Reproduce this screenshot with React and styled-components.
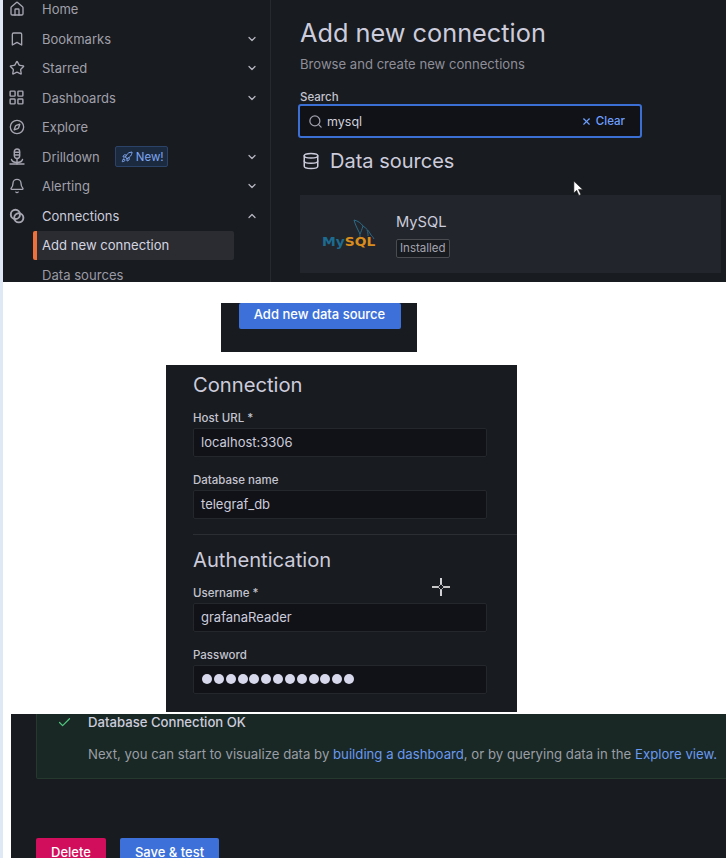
import styled, { createGlobalStyle } from 'styled-components';
import {
  Home,
  Bookmark,
  Star,
  LayoutGrid,
  Compass,
  Bell,
  Rocket,
  Search,
  X,
  Database,
  Check,
  ChevronDown,
  ChevronUp,
} from 'lucide-react';

const GlobalStyle = createGlobalStyle`
  html, body {
    margin: 0;
    padding: 0;
    background: #fff;
  }
  body {
    font-family: Inter, "Liberation Sans", sans-serif;
    overflow: hidden;
  }
`;

const DrilldownIcon = () => (
  <svg width="16" height="18" viewBox="0 0 16 18" fill="none" stroke="currentColor" strokeWidth="1.4" strokeLinecap="round">
    <rect x="5.3" y="1" width="5.4" height="9.5" rx="2.7" />
    <path d="M5.5 4.2h5M5.5 7h5M8 10.5V16" />
    <path d="M2.5 11.5c.6 2.3 2.4 3 5.5 3s4.9-.7 5.5-3" />
    <path d="M1 16h14" />
  </svg>
);

const ConnectionsIcon = () => (
  <svg width="16" height="16" viewBox="0 0 16 16" fill="none" stroke="currentColor" strokeWidth="1.9">
    <circle cx="6.4" cy="6.4" r="4.6" />
    <circle cx="9.8" cy="9.8" r="4.6" />
  </svg>
);

const MysqlDolphin = () => (
  <svg width="22" height="24" viewBox="0 0 22 24" fill="none" stroke="#2b6a86" strokeWidth="1">
    <path d="M1 1c4 1 7 3 9 6 3 2 6 5 8 9 1 1 2 2 3 4" />
    <path d="M1 1c1 4 3 8 5 12 1 1 1 3 1 6" />
    <path d="M10 7c-1 3-2 6-3 8M14 11c1 2 1 4 1 6" />
  </svg>
);

const navItems = [
  { label: 'Home', icon: <Home size={16} /> },
  { label: 'Bookmarks', icon: <Bookmark size={16} />, chevron: 'down' },
  { label: 'Starred', icon: <Star size={16} />, chevron: 'down' },
  { label: 'Dashboards', icon: <LayoutGrid size={17} />, chevron: 'down' },
  { label: 'Explore', icon: <Compass size={16} /> },
  { label: 'Drilldown', icon: <DrilldownIcon />, chevron: 'down', badge: true },
  { label: 'Alerting', icon: <Bell size={16} />, chevron: 'down' },
  { label: 'Connections', icon: <ConnectionsIcon />, chevron: 'up', open: true },
];

const App = () => {
  return (
    <>
      <GlobalStyle />
      <Page>
        <TopShot>
          <Sidebar>
            <NavList>
              {navItems.map((item) => (
                <NavRow key={item.label} $open={item.open}>
                  <NavIcon>{item.icon}</NavIcon>
                  <NavLabel>{item.label}</NavLabel>
                  {item.badge && (
                    <NewBadge>
                      <Rocket size={12} />
                      New!
                    </NewBadge>
                  )}
                  {item.chevron === 'down' && <Chevron><ChevronDown size={12} strokeWidth={2.5} /></Chevron>}
                  {item.chevron === 'up' && <Chevron><ChevronUp size={12} strokeWidth={2.5} /></Chevron>}
                </NavRow>
              ))}
              <SubRow $active>Add new connection</SubRow>
              <SubRow>Data sources</SubRow>
            </NavList>
          </Sidebar>
          <Main>
            <Title>Add new connection</Title>
            <Subtitle>Browse and create new connections</Subtitle>
            <SearchLabel>Search</SearchLabel>
            <SearchBox>
              <Search size={15} color="#a0a0ac" />
              <SearchValue>mysql</SearchValue>
              <ClearButton>
                <X size={11} strokeWidth={2.5} />
                Clear
              </ClearButton>
            </SearchBox>
            <SectionHeading>
              <Database size={18} />
              Data sources
            </SectionHeading>
            <SourceCard>
              <Logo>
                <LogoFish><MysqlDolphin /></LogoFish>
                <LogoText>
                  My<span>SQL</span>
                </LogoText>
              </Logo>
              <SourceInfo>
                <SourceName>MySQL</SourceName>
                <InstalledTag>Installed</InstalledTag>
              </SourceInfo>
            </SourceCard>
            <PointerCursor viewBox="0 0 12 18">
              <path d="M1 1v13l3-3 2.5 5.5 2-1L6 10h4.5z" fill="#fff" stroke="#222" strokeWidth="0.6" />
            </PointerCursor>
          </Main>
        </TopShot>

        <ButtonShot>
          <PrimaryButton $wide>Add new data source</PrimaryButton>
        </ButtonShot>

        <FormShot>
          <FormSection>
            <FormHeading>Connection</FormHeading>
            <Field>
              <FieldLabel>Host URL *</FieldLabel>
              <FieldInput>localhost:3306</FieldInput>
            </Field>
            <Field>
              <FieldLabel>Database name</FieldLabel>
              <FieldInput>telegraf_db</FieldInput>
            </Field>
          </FormSection>
          <Divider />
          <FormSection $lower>
            <FormHeading>Authentication</FormHeading>
            <Field>
              <FieldLabel>Username *</FieldLabel>
              <FieldInput>grafanaReader</FieldInput>
            </Field>
            <Field>
              <FieldLabel>Password</FieldLabel>
              <FieldInput>
                <Dots>
                  {Array.from({ length: 13 }).map((_, i) => (
                    <Dot key={i} />
                  ))}
                </Dots>
              </FieldInput>
            </Field>
          </FormSection>
          <CrossCursor viewBox="0 0 18 18">
            <path d="M9 0v6M9 12v6M0 9h6M12 9h6" stroke="#fff" strokeWidth="1.6" />
            <path d="M9 6l3 3-3 3-3-3z" fill="none" stroke="#ddd" strokeWidth="0.8" />
          </CrossCursor>
        </FormShot>

        <ResultShot>
          <SuccessBox>
            <SuccessIcon><Check size={15} strokeWidth={2} /></SuccessIcon>
            <SuccessBody>
              <SuccessTitle>Database Connection OK</SuccessTitle>
              <SuccessText>
                Next, you can start to visualize data by <TextLink>building a dashboard</TextLink>, or by querying data in the <TextLink>Explore view.</TextLink>
              </SuccessText>
            </SuccessBody>
          </SuccessBox>
          <Actions>
            <DangerButton>Delete</DangerButton>
            <PrimaryButton>Save &amp; test</PrimaryButton>
          </Actions>
        </ResultShot>
      </Page>
    </>
  );
};

export default App;

const Page = styled.div`
  width: 723px;
  height: 858px;
  border-left: 3px solid #dfe8f5;
  overflow: hidden;
  background: #fff;
`;

const TopShot = styled.div`
  display: flex;
  position: relative;
  height: 282px;
  overflow: hidden;
  background: #181b1f;
`;

const Sidebar = styled.nav`
  width: 267px;
  flex-shrink: 0;
  border-right: 1px solid #26292e;
`;

const NavList = styled.div`
  margin-top: -5.5px;
  padding-right: 36px;
`;

const NavRow = styled.div`
  display: flex;
  align-items: center;
  height: 29.5px;
  margin-right: -24px;
  color: ${(p) => (p.$open ? '#ccccdc' : '#a0a0ab')};
`;

const NavIcon = styled.span`
  display: flex;
  justify-content: center;
  width: 27px;
  margin-right: 12px;
  color: #a6a6b2;
`;

const NavLabel = styled.span`
  font-size: 13px;
  line-height: 16px;
`;

const NewBadge = styled.span`
  display: inline-flex;
  align-items: center;
  gap: 3px;
  height: 19px;
  margin-left: 15px;
  padding: 0 3px 0 5px;
  border: 1px solid #2b4368;
  border-radius: 2px;
  background: #1c2a40;
  color: #7ea6ee;
  font-size: 11.5px;
`;

const Chevron = styled.span`
  display: flex;
  margin-left: auto;
  color: #b5b5c0;
`;

const SubRow = styled.div`
  display: flex;
  align-items: center;
  height: 29.5px;
  margin-left: 30px;
  padding-left: ${(p) => (p.$active ? '5px' : '9px')};
  border-left: ${(p) => (p.$active ? '4px solid #f0703a' : 'none')};
  border-radius: 2px;
  background: ${(p) => (p.$active ? '#2a2c31' : 'transparent')};
  color: ${(p) => (p.$active ? '#d4d4e0' : '#9a9aa6')};
  font-size: 13.1px;
`;

const Main = styled.main`
  flex: 1;
  min-width: 0;
  padding: 15px 5px 0 29px;
`;

const Title = styled.h1`
  margin: 0;
  color: #ccccdc;
  font-size: 25.3px;
  font-weight: 400;
  line-height: 36px;
`;

const Subtitle = styled.p`
  margin: 4px 0 0;
  color: #8e8e99;
  font-size: 13.1px;
  line-height: 18px;
`;

const SearchLabel = styled.div`
  margin-top: 17px;
  color: #c4c4d0;
  font-size: 11.5px;
  font-weight: 500;
  line-height: 15px;
`;

const SearchBox = styled.div`
  display: flex;
  align-items: center;
  gap: 4px;
  box-sizing: border-box;
  width: 344px;
  height: 34px;
  margin-left: -2px;
  margin-top: -1px;
  padding: 0 16px 0 9px;
  border: 1px solid #181b1f;
  outline: 2px solid #3b6fd4;
  outline-offset: -2px;
  border-radius: 3px;
  background: #111217;
`;

const SearchValue = styled.span`
  flex: 1;
  color: #d0d0dc;
  font-size: 12.5px;
  font-weight: 400;
`;

const ClearButton = styled.span`
  display: flex;
  align-items: center;
  gap: 4px;
  color: #6e9fff;
  font-size: 11.5px;
  font-weight: 500;
`;

const SectionHeading = styled.h2`
  display: flex;
  align-items: center;
  gap: 10px;
  margin: 10px 0 0 2px;
  color: #ccccdc;
  font-size: 20px;
  font-weight: 400;
  line-height: 26px;
`;

const SourceCard = styled.div`
  display: flex;
  align-items: center;
  height: 78px;
  margin-top: 21px;
  background: #22252b;
`;

const Logo = styled.div`
  position: relative;
  width: 96px;
  height: 30px;
  flex-shrink: 0;
`;

const LogoFish = styled.span`
  position: absolute;
  top: 0;
  left: 53px;
`;

const LogoText = styled.span`
  position: absolute;
  left: 22px;
  bottom: 1px;
  color: #1c6b91;
  font-family: "DejaVu Sans", sans-serif;
  font-size: 11.5px;
  font-weight: 700;
  line-height: 12px;
  transform: scaleX(1.2);
  transform-origin: left center;

  span {
    color: #d98d1c;
  }
`;

const SourceInfo = styled.div`
  display: flex;
  flex-direction: column;
  align-items: flex-start;
  gap: 8px;
  margin-top: 2px;
`;

const SourceName = styled.div`
  color: #ccccdc;
  font-size: 14.7px;
  line-height: 18px;
`;

const InstalledTag = styled.span`
  padding: 0 3px;
  border: 1px solid #4a4c52;
  border-radius: 2px;
  background: #181b1f;
  color: #a4a4b0;
  font-size: 11.5px;
  line-height: 17px;
`;

const PointerCursor = styled.svg`
  position: absolute;
  left: 570px;
  top: 180px;
  width: 11px;
  height: 17px;
`;

const ButtonShot = styled.div`
  box-sizing: border-box;
  width: 196px;
  height: 49px;
  margin: 21px 0 0 218px;
  padding-left: 18px;
  background: #181b1f;
`;

const PrimaryButton = styled.button`
  display: block;
  box-sizing: border-box;
  width: ${(p) => (p.$wide ? '162px' : '99px')};
  height: ${(p) => (p.$wide ? '26px' : '32px')};
  padding: ${(p) => (p.$wide ? '0 1px 5px 0' : '0 0 5px')};
  border: none;
  border-radius: 2px;
  background: #3d71d9;
  color: #fff;
  font-family: inherit;
  font-size: 13px;
  font-weight: 500;
`;

const DangerButton = styled(PrimaryButton)`
  width: 70px;
  background: #d10e5c;
`;

const FormShot = styled.div`
  position: relative;
  box-sizing: border-box;
  width: 351px;
  height: 347px;
  margin: 13px 0 0 163px;
  background: #181b1f;
`;

const FormSection = styled.section`
  padding: ${(p) => (p.$lower ? '12px' : '7px')} 30px 0 27px;
`;

const FormHeading = styled.h3`
  margin: 0;
  color: #ccccdc;
  font-size: 20.2px;
  font-weight: 400;
  line-height: 26px;
`;

const Field = styled.div`
  margin-top: 13px;
  & + & {
    margin-top: 16px;
  }
`;

const FieldLabel = styled.div`
  margin-bottom: 2px;
  color: #c4c4d0;
  font-size: 11.5px;
  font-weight: 500;
  line-height: 15px;
`;

const FieldInput = styled.div`
  display: flex;
  align-items: center;
  box-sizing: border-box;
  height: 29px;
  padding: 0 7px 2px;
  border: 1px solid #24272c;
  border-radius: 2px;
  background: #111217;
  color: #ccccdc;
  font-size: 13px;
`;

const Dots = styled.span`
  display: flex;
  gap: 1.85px;
  margin-left: 1px;
`;

const Dot = styled.span`
  width: 10px;
  height: 10px;
  border-radius: 50%;
  background: #d8d8ec;
`;

const Divider = styled.div`
  height: 1px;
  margin: 15px 0 0 27px;
  background: #2b2e33;
`;

const CrossCursor = styled.svg`
  position: absolute;
  left: 266px;
  top: 213px;
  width: 18px;
  height: 18px;
`;

const ResultShot = styled.div`
  box-sizing: border-box;
  width: 715px;
  height: 144px;
  margin: 2px 0 0 8px;
  padding-left: 25px;
  background: #181b1f;
  overflow: hidden;
`;

const SuccessBox = styled.div`
  display: flex;
  box-sizing: border-box;
  height: 65px;
  margin-right: -10px;
  border: 1px solid #26392f;
  border-top: none;
  border-radius: 0 0 2px 2px;
  background: #192824;
`;

const SuccessIcon = styled.span`
  display: flex;
  width: 51px;
  padding: 1px 0 0 20px;
  box-sizing: border-box;
  color: #4fc47e;
`;

const SuccessBody = styled.div`
  flex: 1;
  min-width: 0;
`;

const SuccessTitle = styled.div`
  color: #ccccdc;
  font-size: 13.15px;
  font-weight: 500;
  line-height: 16px;
`;

const SuccessText = styled.div`
  margin-top: 16px;
  color: #9a9ea6;
  font-size: 13.2px;
  line-height: 16px;
  white-space: nowrap;
`;

const TextLink = styled.span`
  color: #6a99f0;
`;

const Actions = styled.div`
  display: flex;
  gap: 14px;
  margin-top: 59px;
`;
